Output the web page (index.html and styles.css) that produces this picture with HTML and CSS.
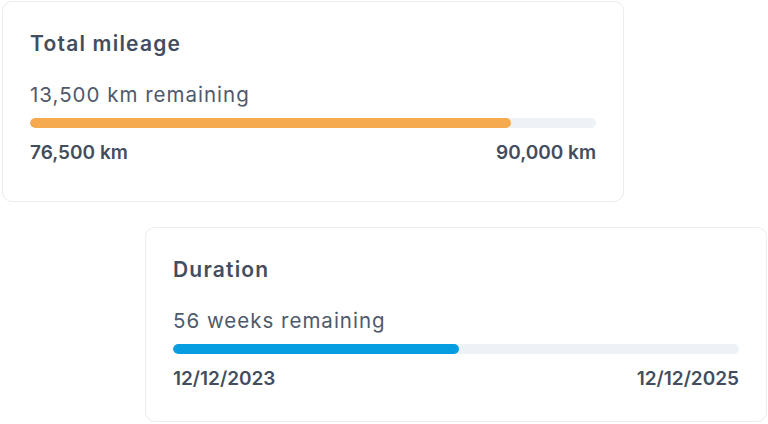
FILE: index.html
```html
<!DOCTYPE html>
<html lang="en">
<head>
    <meta charset="UTF-8">
    <meta name="viewport" content="width=device-width, initial-scale=1.0">
    <title>Contract progress</title>
    <link rel="stylesheet" href="styles.css">
</head>
<body>
    <div class="stack">
        <div class="card card-mileage">
            <h3 class="card-title">Total mileage</h3>
            <p class="remaining">13,500 km remaining</p>
            <div class="track">
                <div class="fill fill-orange" style="width: 85%;"></div>
            </div>
            <div class="limits">
                <span>76,500 km</span>
                <span>90,000 km</span>
            </div>
        </div>

        <div class="card card-duration">
            <h3 class="card-title">Duration</h3>
            <p class="remaining">56 weeks remaining</p>
            <div class="track">
                <div class="fill fill-blue" style="width: 50.5%;"></div>
            </div>
            <div class="limits">
                <span>12/12/2023</span>
                <span>12/12/2025</span>
            </div>
        </div>
    </div>
</body>
</html>
```

FILE: styles.css
```css
body {
    font-family: Inter, "Open Sans", sans-serif;
    background-color: #ffffff;
    color: #475467;
    margin: 0;
    padding: 0;
}

.stack {
    display: flex;
    flex-direction: column;
    gap: 25px;
    padding: 1px 1px 0 2px;
}

.card {
    box-sizing: border-box;
    width: 622px;
    padding: 28px 27px 0 27px;
    background: #ffffff;
    border: 1px solid #ececee;
    border-radius: 10px;
}

.card-mileage {
    height: 201px;
}

.card-duration {
    height: 195px;
    align-self: flex-end;
}

.card-title {
    margin: 0;
    font-size: 21px;
    line-height: 28px;
    font-weight: 600;
    letter-spacing: 1.2px;
    color: #434d60;
}

.remaining {
    margin: 23px 0 0 0;
    font-size: 20.5px;
    line-height: 28px;
    font-weight: 400;
    letter-spacing: 1px;
    color: #4f596b;
}

.track {
    height: 10px;
    margin-top: 9px;
    border-radius: 5px;
    background-color: #eef2f6;
    overflow: hidden;
}

.fill {
    height: 100%;
    border-radius: 5px;
}

.fill-orange {
    background-color: #f6aa4f;
}

.fill-blue {
    background-color: #079ee1;
}

.limits {
    display: flex;
    justify-content: space-between;
    margin-top: 13px;
    font-size: 19px;
    line-height: 24px;
    font-weight: 600;
    color: #434d60;
}
```
